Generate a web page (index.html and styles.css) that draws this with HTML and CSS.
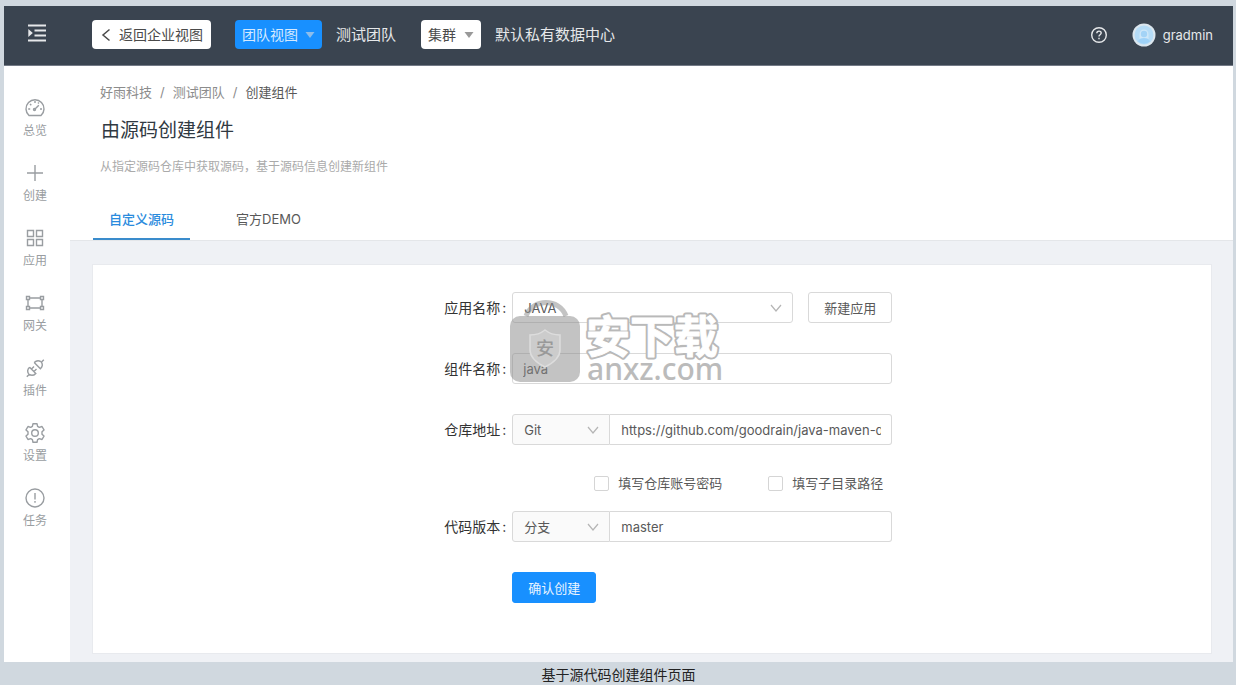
FILE: index.html
```html
<!DOCTYPE html>
<html lang="zh-CN">
<head>
<meta charset="utf-8">
<meta name="viewport" content="width=device-width, initial-scale=1">
<title>由源码创建组件</title>
<link rel="stylesheet" href="styles.css">
</head>
<body>
<figure class="figure">
  <div class="app">
    <header class="topbar">
      <button class="menu-toggle" type="button" aria-label="展开菜单">
        <svg width="20" height="20" viewBox="0 0 20 20" fill="none" stroke="currentColor" stroke-width="1.800"><path d="M1 2.500h18M7.500 7.500h11.500M7.500 12.500h11.500M1 17.500h18"/><path d="M1.300 6v8L5.800 10z" fill="currentColor" stroke="none"/></svg>
      </button>
      <button class="chip chip-back" type="button">
        <svg width="10" height="14" viewBox="0 0 10 14" fill="none" stroke="currentColor" stroke-width="1.500"><path d="M8.500 1.500L2 7l6.500 5.500"/></svg>
        返回企业视图
      </button>
      <button class="chip chip-team" type="button">团队视图
        <svg width="10" height="6" viewBox="0 0 10 6" fill="#8dbdea"><path d="M0.500 0h9L5 6z"/></svg>
      </button>
      <span class="crumb-name team-name">测试团队</span>
      <button class="chip chip-cluster" type="button">集群
        <svg width="10" height="6" viewBox="0 0 10 6" fill="#999"><path d="M0.500 0h9L5 6z"/></svg>
      </button>
      <span class="crumb-name">默认私有数据中心</span>
      <div class="account">
        <button class="help" type="button" aria-label="帮助">
          <svg width="18" height="18" viewBox="0 0 18 18" fill="none" stroke="currentColor" stroke-width="1.400"><circle cx="9" cy="9" r="7.300"/><path d="M6.800 7.300c0-1.400 1-2.200 2.200-2.200s2.200.8 2.200 2c0 1.600-2.200 1.700-2.200 3.300"/><path d="M9 11.700v1.500"/></svg>
        </button>
        <svg class="avatar" width="24" height="24" viewBox="0 0 24 24"><circle cx="12" cy="12" r="11.500" fill="#dbe6ee"/><circle cx="12" cy="12" r="9.500" fill="#b5dcf7"/><path d="M7.500 17V11a4.500 4.500 0 0 1 9 0v6z" fill="#cfe7f8"/><circle cx="12" cy="11" r="3.200" fill="#a3d3f6"/><path d="M6 18.500c1-3 3-3.600 6-3.600s5 .6 6 3.600a9.500 9.500 0 0 1-12 0z" fill="#9ed2f8"/></svg>
        <span class="user">gradmin</span>
      </div>
    </header>
    <div class="body">
      <nav class="sidebar" aria-label="主导航">
        <a class="nav-item" href="#"><svg width="22" height="22" viewBox="0 0 22 22"><path d="M5 18.500A9 9 0 1 1 17 18.500z"/><path d="M10.500 12.500L14.800 8.200M11 4v2M4.200 12h2M16 12h2M6 7l1.300 1.300M14.800 5.500l-.8 1"/><circle cx="10.500" cy="12.500" r="1"/></svg>总览</a>
        <a class="nav-item" href="#"><svg width="22" height="22" viewBox="0 0 22 22"><path d="M11 3v16M3 11h16"/></svg>创建</a>
        <a class="nav-item" href="#"><svg width="22" height="22" viewBox="0 0 22 22"><path d="M3.500 3.500h6v6h-6zM12.500 3.500h6v6h-6zM3.500 12.500h6v6h-6zM12.500 12.500h6v6h-6z"/></svg>应用</a>
        <a class="nav-item" href="#"><svg width="22" height="22" viewBox="0 0 22 22"><path d="M2.500 4.500h3v3h-3zM16.500 4.500h3v3h-3zM2.500 14.500h3v3h-3zM16.500 14.500h3v3h-3zM5.500 6h11M5.500 16h11M4 7.500v7M18 7.500v7"/></svg>网关</a>
        <a class="nav-item" href="#"><svg width="22" height="22" viewBox="0 0 22 22"><path d="M5.600 10.200l6.200 6.200c-1.900 2-4.600 2.300-6.600 1L2.800 19.800M5.600 10.200c-2 1.900-2.300 4.600-1 6.600M10.200 5.600l6.200 6.200c2-1.900 2.300-4.600 1-6.600L19.800 2.800M10.200 5.600c1.900-2 4.600-2.300 6.600-1M7.500 12l2.500-2.500M10 14.500l2.500-2.500"/></svg>插件</a>
        <a class="nav-item" href="#"><svg width="22" height="22" viewBox="0 0 22 22"><path d="M9 1.700h4l.6 2.700 1.700 1 2.700-.9 2 3.400-2 1.900v2.400l2 1.900-2 3.400-2.700-.9-1.700 1-.6 2.700H9l-.6-2.700-1.700-1-2.700.9-2-3.400 2-1.900V9.800L2 7.900l2-3.400 2.700.9 1.700-1z" stroke-linejoin="round"/><circle cx="11" cy="11" r="3.300"/></svg>设置</a>
        <a class="nav-item" href="#"><svg width="22" height="22" viewBox="0 0 22 22"><circle cx="11" cy="11" r="9"/><path d="M11 6v6.500M11 14v1.700"/></svg>任务</a>
      </nav>
      <main class="main">
        <section class="page-head">
          <nav class="breadcrumb" aria-label="面包屑">
            <a href="#">好雨科技</a><span>/</span><a href="#">测试团队</a><span>/</span><strong>创建组件</strong>
          </nav>
          <h1 class="title">由源码创建组件</h1>
          <p class="desc">从指定源码仓库中获取源码，基于源码信息创建新组件</p>
          <div class="tabs" role="tablist">
            <button class="tab tab-active" type="button" role="tab" aria-selected="true">自定义源码</button>
            <button class="tab" type="button" role="tab" aria-selected="false">官方DEMO</button>
          </div>
        </section>
        <section class="card">
          <form class="form">
            <label class="label" for="app">应用名称</label>
            <div class="field field-app">
              <span class="select"><select id="app"><option>JAVA</option></select><svg class="chevron" width="12" height="8" viewBox="0 0 12 8"><path d="M1 1l5 6 5-6"/></svg></span>
              <button class="btn" type="button">新建应用</button>
            </div>
            <label class="label" for="component">组件名称</label>
            <div class="field"><input class="input" id="component" type="text" value="java"></div>
            <label class="label" for="repo">仓库地址</label>
            <div class="field field-group">
              <span class="select addon"><select aria-label="仓库类型"><option>Git</option></select><svg class="chevron" width="12" height="8" viewBox="0 0 12 8"><path d="M1 1l5 6 5-6"/></svg></span>
              <input class="input" id="repo" type="text" value="https://github.com/goodrain/java-maven-demo.git">
            </div>
            <div class="checks">
              <label class="check"><input type="checkbox">填写仓库账号密码</label>
              <label class="check"><input type="checkbox">填写子目录路径</label>
            </div>
            <label class="label" for="version">代码版本</label>
            <div class="field field-group">
              <span class="select addon"><select aria-label="版本类型"><option>分支</option></select><svg class="chevron" width="12" height="8" viewBox="0 0 12 8"><path d="M1 1l5 6 5-6"/></svg></span>
              <input class="input" id="version" type="text" value="master">
            </div>
            <div class="actions"><button class="btn btn-primary" type="submit">确认创建</button></div>
            <svg class="watermark" width="216" height="86" viewBox="0 0 216 86">
              <path d="M17 17c7-18 33-18 40 0" fill="none" stroke="#888" stroke-opacity=".5" stroke-width="5"/>
              <rect x="1" y="17" width="70" height="66" rx="10" fill="#888" fill-opacity=".5"/>
              <path d="M36 31c5 4 10 5 15 5v15c0 8-7 13-15 17-8-4-15-9-15-17V36c5 0 10-1 15-5z" fill="#ccc" stroke="#ddd" stroke-width="1.500"/>
              <text class="wm-shield" x="36" y="56" text-anchor="middle">安</text>
              <defs><text id="brand" class="wm-cn" x="77" y="54">安下载</text></defs>
              <use href="#brand" class="wm-edge"/>
              <use href="#brand" class="wm-face"/>
              <text class="wm-en" x="78" y="81">anxz.com</text>
            </svg>
          </form>
        </section>
      </main>
    </div>
  </div>
  <figcaption class="caption">基于源代码创建组件页面</figcaption>
</figure>
</body>
</html>
```
FILE: styles.css
```css
* { box-sizing: border-box; }

body {
  margin: 0;
  background: #d0d8df;
  color: #595959;
  font: 14px/20px Inter, "Noto Sans CJK SC", sans-serif;
}

button, input, select { font: inherit; color: inherit; margin: 0; }
button { cursor: pointer; }
a { color: inherit; text-decoration: none; }
svg { flex: none; }

.figure { margin: 0; padding: 6px 3px 0 4px; }
.app { background: #fff; }
.caption { padding-top: 3px; color: #222; text-align: center; }

.topbar {
  display: flex;
  align-items: center;
  height: 60px;
  padding: 0 20px 2px;
  background: #3a4450;
  color: #e6e8ea;
  border-bottom: 1px solid #737a86;
}
.menu-toggle, .help {
  display: flex;
  padding: 0;
  border: 0;
  background: none;
  color: #e6e8ea;
}
.menu-toggle { margin: 0 45px 4px 3px; }
.chip {
  display: flex;
  align-items: center;
  height: 29px;
  padding: 0 7px;
  border: 0;
  border-radius: 4px;
  background: #fff;
  color: #4a4a4a;
  white-space: nowrap;
}
.chip-back { gap: 8px; padding: 0 8px 0 9px; margin-right: 24px; }
.chip-team { gap: 7px; background: #1890ff; color: #d5eaff; }
.chip-cluster { gap: 8px; }
.crumb-name { margin-left: 14px; font-size: 15px; white-space: nowrap; }
.team-name { margin-right: 25px; }
.account { display: flex; align-items: center; margin-left: auto; }
.avatar { margin: 0 7px 0 24px; }
.user { font-size: 13px; }

.body { display: flex; }
.sidebar {
  display: flex;
  flex: none;
  flex-direction: column;
  gap: 21px;
  width: 66px;
  padding: 31px 4px 0 0;
}
.nav-item {
  display: flex;
  flex-direction: column;
  align-items: center;
  gap: 2px;
  color: #999da1;
  font-size: 12px;
}
.nav-item svg { fill: none; stroke: currentColor; stroke-width: 1.4; }

.main { flex: 1; min-width: 0; padding-bottom: 8px; background: #eff1f5; }
.page-head {
  padding: 16px 23px 0;
  background: #fff;
  border-bottom: 1px solid #e4e6e9;
}
.breadcrumb { display: flex; gap: 8px; padding-left: 7px; color: #8c8c8c; font-size: 13px; }
.breadcrumb strong { color: #595959; font-weight: 400; }
.title {
  margin: 15px 0 0;
  padding-left: 8px;
  color: #303942;
  font-size: 19px;
  font-weight: 400;
  line-height: 28px;
}
.desc { margin: 12px 0 0; padding-left: 7px; color: #aaa; font-size: 12px; }
.tabs { display: flex; gap: 30px; margin-top: 22px; }
.tab {
  height: 41px;
  padding: 0 16px;
  border: 0;
  border-bottom: 2px solid transparent;
  background: none;
  font-size: 13px;
}
.tab-active { border-color: #3a8ccc; color: #2a8bdd; font-weight: 500; }

.card {
  min-height: 390px;
  margin: 23px 21px 0 22px;
  padding: 27px 0;
  border: 1px solid #e8eaee;
  background: #fff;
}
.form {
  position: relative;
  display: grid;
  grid-template-columns: 37.5% minmax(0, 380px);
  row-gap: 30px;
}
.label {
  padding-right: 6px;
  color: #333;
  line-height: 31px;
  text-align: right;
}
.label::after { content: ":"; margin-left: 2px; }
.field { display: flex; font-size: 13px; }
.field-app { gap: 15px; }
.input, .select select {
  width: 100%;
  min-width: 0;
  height: 31px;
  padding: 0 10px;
  border: 1px solid #d9d9d9;
  border-radius: 3px;
  background: #fff;
  color: #595959;
}
.select { position: relative; flex: 1; }
.select select { appearance: none; padding-left: 11px; }
.chevron {
  position: absolute;
  top: 12px;
  right: 11px;
  fill: none;
  stroke: #b5b5b5;
  stroke-width: 1.2;
  pointer-events: none;
}
.addon { flex: none; width: 98px; }
.addon select { border-radius: 3px 0 0 3px; background: #fafafa; }
.field-group .input { border-left: 0; border-radius: 0 3px 3px 0; padding-left: 11px; }
.btn {
  flex: none;
  height: 31px;
  padding: 0 15px;
  border: 1px solid #d9d9d9;
  border-radius: 3px;
  background: #fff;
  font-size: 13px;
}
.btn-primary { border-color: #1890ff; background: #1890ff; color: #e9f4ff; }
.checks {
  grid-column: 2;
  display: flex;
  gap: 46px;
  margin: -2px 0 -12px;
  padding-left: 82px;
  white-space: nowrap;
}
.check { display: flex; align-items: center; gap: 9px; font-size: 13px; }
.check input {
  appearance: none;
  width: 15px;
  height: 15px;
  border: 1px solid #d5d5d5;
  border-radius: 2px;
  background: #fff;
}
.actions { grid-column: 2; }

.watermark {
  position: absolute;
  top: 7px;
  left: 37.5%;
  margin-left: -3px;
  pointer-events: none;
}
.wm-shield { fill: #999; font-size: 18px; font-weight: 500; }
.wm-cn {
  font-size: 44px;
  font-weight: 700;
  stroke-linejoin: round;
}
.wm-edge { fill: #b9b9b9; stroke: #b9b9b9; stroke-width: 5; }
.wm-face { fill: #fff; stroke: #fff; stroke-width: 1; }
.wm-en { fill: #bbb; font-family: "Noto Sans", sans-serif; font-size: 30px; font-weight: 500; }
```
